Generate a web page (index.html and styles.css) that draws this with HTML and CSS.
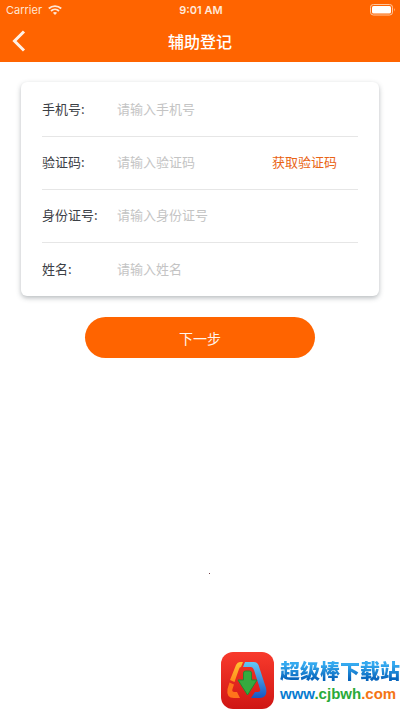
FILE: index.html
```html
<!DOCTYPE html>
<html lang="zh-CN">
<head>
<meta charset="utf-8">
<meta name="viewport" content="width=device-width, initial-scale=1">
<title>辅助登记</title>
<link rel="stylesheet" href="styles.css">
</head>
<body>
<header class="top">
  <div class="status">
    <div class="carrier">
      <span>Carrier</span>
      <svg width="14" height="10" viewBox="0 0 14 10" fill="none" stroke="currentColor" stroke-width="1.8" aria-hidden="true">
        <path d="M.8 3.5C4.3.2 9.7.2 13.2 3.5M3 6C5.3 3.9 8.7 3.9 11 6"/>
        <path d="M4.9 7.8C6.1 6.8 7.9 6.8 9.1 7.8L7 10Z" fill="currentColor" stroke="none"/>
      </svg>
    </div>
    <time class="clock">9:01 AM</time>
    <svg class="battery" width="26" height="12" viewBox="0 0 26 12" aria-hidden="true">
      <rect x=".5" y=".5" width="22" height="10.5" rx="2.8" fill="none" stroke="#ffc69e"/>
      <rect x="2" y="2" width="19" height="7.5" rx="1.5" fill="#fff"/>
      <path d="M24 4Q25.5 5.75 24 7.5Z" fill="#ffc69e"/>
    </svg>
  </div>
  <nav class="bar">
    <button class="back" type="button" aria-label="返回">
      <svg width="14" height="22" viewBox="0 0 14 22" fill="none" stroke="currentColor" stroke-width="3" aria-hidden="true"><path d="M12 1.5L2.5 11L12 20.5"/></svg>
    </button>
    <h1>辅助登记</h1>
  </nav>
</header>
<main>
  <form>
    <div class="card">
      <div class="row"><label for="phone">手机号:</label><input id="phone" type="tel" placeholder="请输入手机号"></div>
      <div class="row"><label for="code">验证码:</label><input id="code" type="text" placeholder="请输入验证码"><button class="get-code" type="button">获取验证码</button></div>
      <div class="row"><label for="idno">身份证号:</label><input id="idno" type="text" placeholder="请输入身份证号"></div>
      <div class="row"><label for="name">姓名:</label><input id="name" type="text" placeholder="请输入姓名"></div>
    </div>
    <button class="next" type="submit">下一步</button>
  </form>
</main>
<footer>
  <div class="speck"></div>
  <div class="brand">
    <svg width="53" height="57" viewBox="0 0 53 57" aria-hidden="true">
      <defs>
        <linearGradient id="red" x2="0" y2="1"><stop stop-color="#f83a2c"/><stop offset="1" stop-color="#cf1614"/></linearGradient>
        <linearGradient id="gold" x2="0" y2="1"><stop stop-color="#ffc332"/><stop offset="1" stop-color="#ff8a1c"/></linearGradient>
        <linearGradient id="blue" x2="0" y2="1"><stop stop-color="#64c9f5"/><stop offset="1" stop-color="#1556c5"/></linearGradient>
      </defs>
      <rect width="53" height="57" rx="12" fill="url(#red)"/>
      <path d="M22 10L20 15Q18.500 15 18 17L13.500 30L9 28L15 13Q16.500 10 19 10Z" fill="url(#gold)"/>
      <path d="M8.500 30.500L13 32.500L11.500 37Q10.500 40 13.500 40H16L19 46H13Q5 46 6.500 37Z" fill="#ff741b"/>
      <path d="M24 10H33Q36 10 37.500 13L45 36Q47 46 39 46H30L34 40H37Q40 40 39 37L33 18Q32 15 30 15H22Z" fill="url(#blue)"/>
      <path d="M22.500 21Q22.500 19 24.500 19H28.500Q30.500 19 30.500 21V28H36L26.500 43L17 28H22.500Z" fill="#35aa3e" stroke="#218b31"/>
    </svg>
    <div class="brand-text">
      <strong class="brand-name">超级棒下载站</strong>
      <span class="site"><span class="site-blue">www</span><span class="site-green">.cjbwh</span><span class="site-orange">.com</span></span>
    </div>
  </div>
</footer>
</body>
</html>
```
FILE: styles.css
```css
* { box-sizing: border-box; }

body {
  margin: 0;
  min-height: 100vh;
  display: flex;
  flex-direction: column;
  background: #fff;
  color: #3c4046;
  font-family: "Noto Sans CJK SC", sans-serif;
  font-size: 13px;
}

button, input {
  padding: 0;
  border: 0;
  background: none;
  font: inherit;
}

button { cursor: pointer; }

.top {
  background: #ff6400;
  color: #fff;
}

.status {
  display: grid;
  grid-template-columns: 1fr auto 1fr;
  align-items: center;
  height: 20px;
  padding: 0 4px 0 6px;
  font-family: Inter, sans-serif;
  font-size: 11px;
}

.carrier {
  display: flex;
  align-items: center;
  gap: 6px;
  color: #ffe6d4;
}

.clock {
  color: #ffe9da;
  font-weight: 600;
}

.battery { justify-self: end; }

.bar {
  display: grid;
  grid-template-columns: 36px 1fr 36px;
  align-items: center;
  height: 42px;
}

.back {
  display: flex;
  padding-left: 12px;
  color: #fff1e5;
}

h1 {
  margin: 0;
  font-size: 16px;
  font-weight: 500;
  line-height: 22px;
  text-align: center;
}

main { padding: 20px 21px; }

.card {
  padding: 2px 21px 0;
  border-radius: 6px;
  box-shadow: 0 2px 5px rgba(50, 60, 70, .35);
}

.row {
  display: flex;
  align-items: center;
  height: 53px;
  padding-bottom: 3px;
  border-bottom: 1px solid #e6e6e6;
}

.row:last-child { border-bottom: 0; }

.row label {
  flex: 0 0 75px;
  white-space: nowrap;
}

.row input {
  flex: 1;
  min-width: 0;
  color: inherit;
  outline-color: #ff6400;
}

.row input::placeholder { color: #c4c4c4; opacity: 1; }

.get-code {
  margin-right: 21px;
  color: #e96416;
}

.next {
  display: block;
  width: 64%;
  height: 41px;
  margin: 21px auto 0;
  border-radius: 21px;
  background: #ff6400;
  color: #fff4ec;
  font-size: 14px;
}

footer {
  display: flex;
  flex-direction: column;
  gap: 78px;
  margin-top: auto;
  padding-bottom: 1px;
}

.speck {
  width: 2px;
  height: 1px;
  margin-left: 52%;
  align-self: flex-start;
  border-left: 1px solid transparent;
  background: #704047;
  background-clip: padding-box;
}

.brand {
  display: flex;
  justify-content: flex-end;
  align-items: center;
  gap: 6px;
}

.brand-text {
  display: flex;
  flex-direction: column;
}

.brand-name {
  background: linear-gradient(#35aaf0 25%, #0866bd 80%);
  background-clip: text;
  color: transparent;
  font-size: 20px;
  font-weight: 900;
  line-height: 26px;
}

.site {
  font-family: "Liberation Sans", sans-serif;
  font-size: 15px;
  font-weight: 700;
  line-height: 20px;
}

.site-blue { color: #087bd0; }
.site-green { color: #2aaa3a; }
.site-orange { color: #f47516; }
```
